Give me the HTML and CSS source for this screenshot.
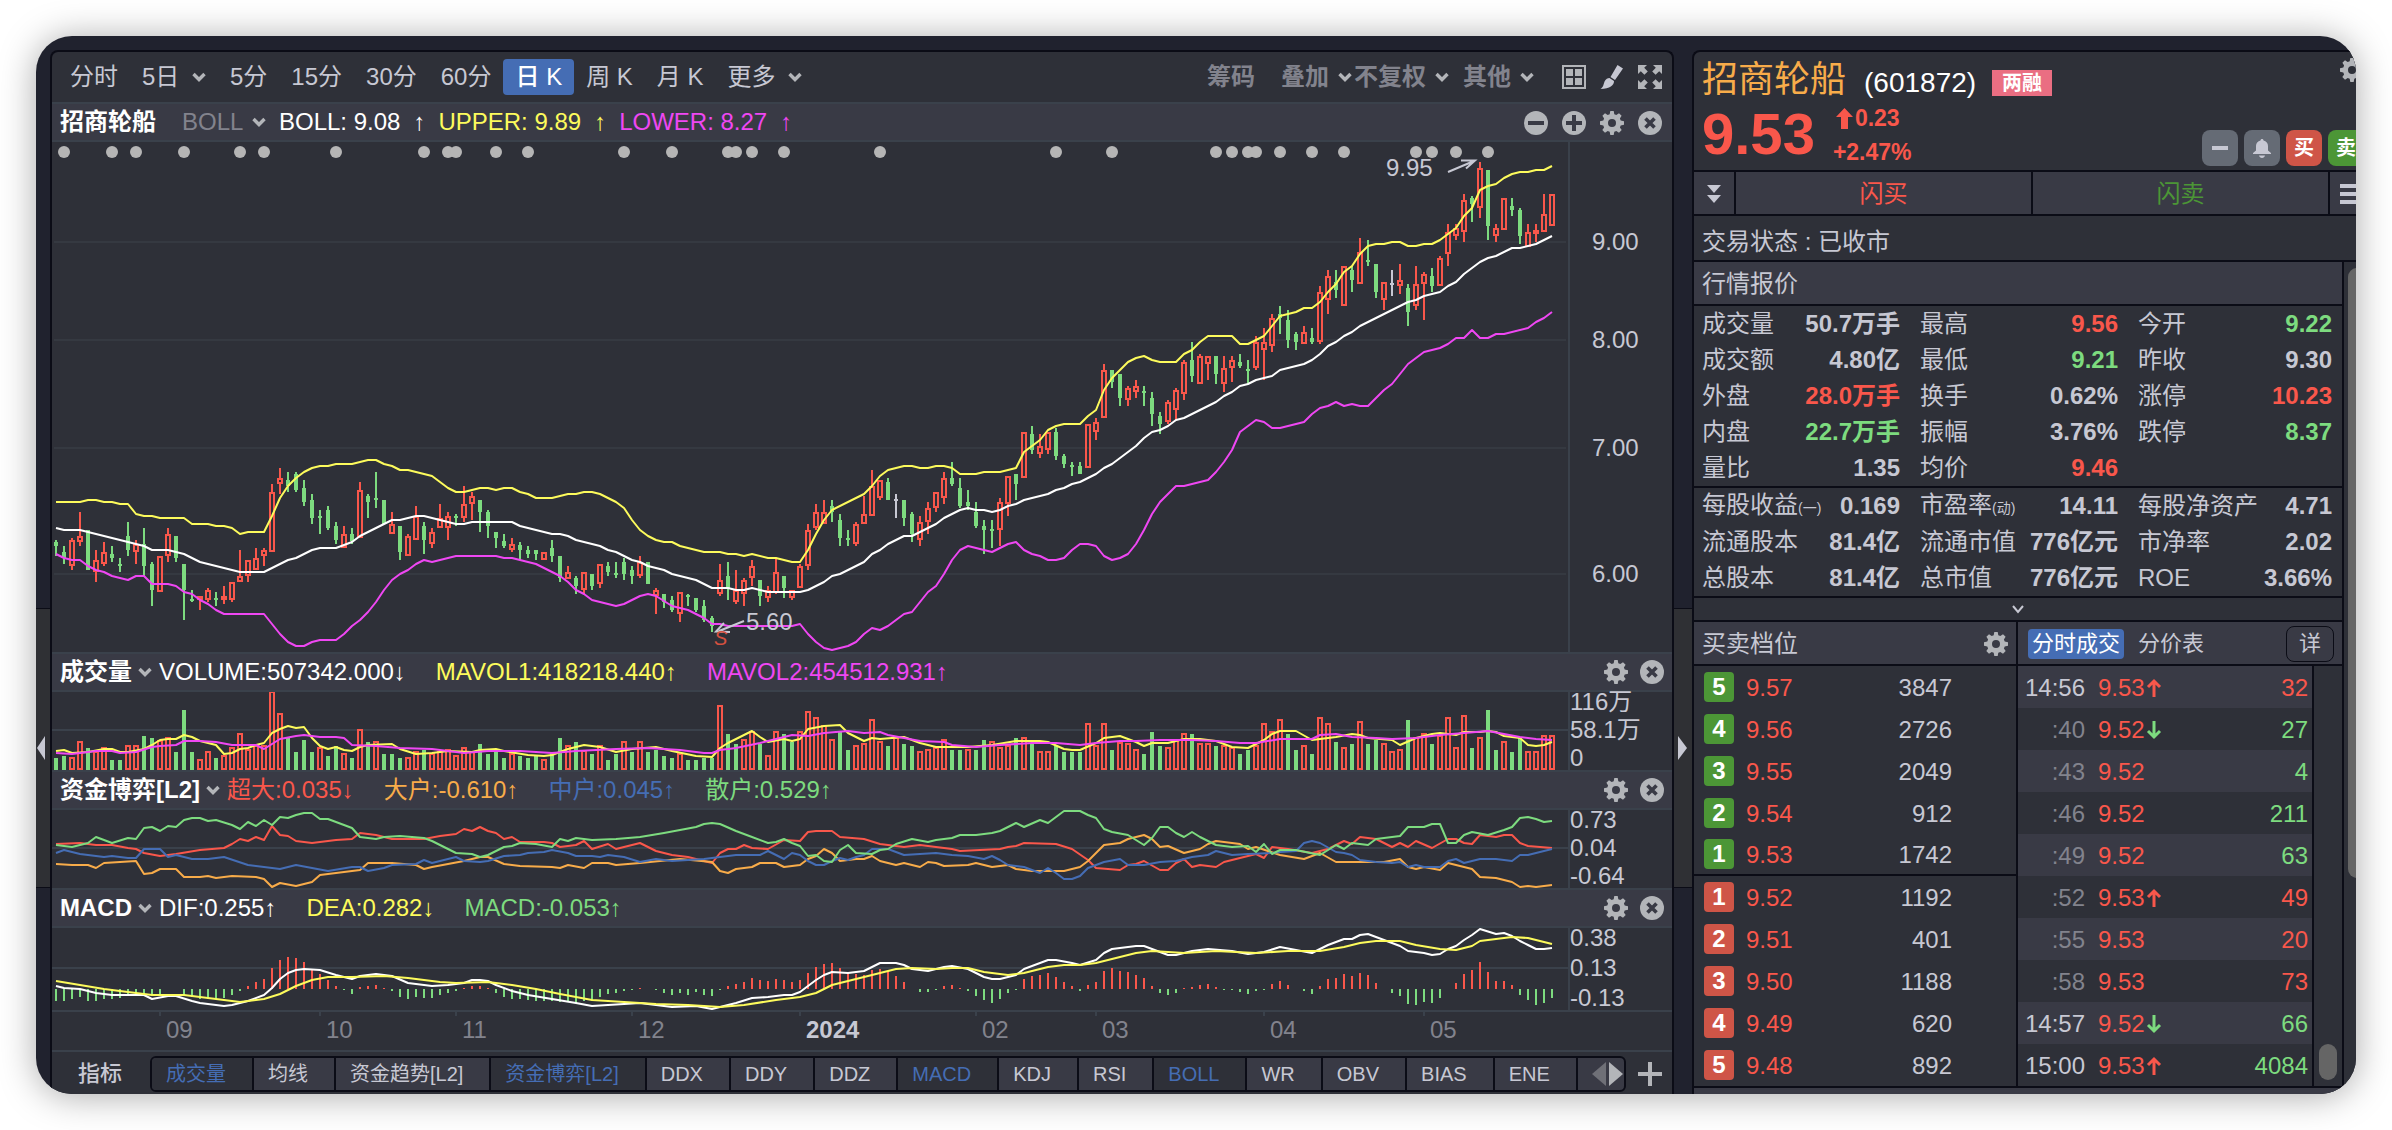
FILE: index.html
```html
<!DOCTYPE html>
<html lang="zh-CN">
<head>
<meta charset="UTF-8">
<meta name="viewport" content="width=device-width, initial-scale=1.0">
<title>招商轮船 (601872)</title>
<link rel="stylesheet" href="styles.css">
</head>
<body>

<!-- shared icons -->
<svg class="sprite" aria-hidden="true">
    <symbol id="chev" viewBox="0 0 14 10"><path d="M1.5 2L7 7.5L12.5 2" fill="none" stroke="currentColor" stroke-width="3.4"/></symbol>
    <symbol id="gear" viewBox="0 0 24 24"><path fill="currentColor" fill-rule="evenodd" d="M10.3 0h3.4l.6 3.2 2 .8L19 2.2l2.6 2.6L19.9 7.600l.8 1.900 3.300.700v3.600l-3.300.700-.8 1.900 1.800 2.700-2.700 2.700-2.700-1.800-2 .8-.6 3.200h-3.400l-.6-3.200-2-.8L5 21.800l-2.700-2.700 1.800-2.700-.8-1.900L0 13.800v-3.600l3.300-.7.800-1.900L2.400 4.800 5 2.200 7.700 4l2-.8zM12 8a4 4 0 1 0 0 8a4 4 0 1 0 0-8z"/></symbol>
    <symbol id="close" viewBox="0 0 24 24"><circle cx="12" cy="12" r="12" fill="currentColor"/><path d="M7.500 7.500l9 9M16.500 7.500l-9 9" stroke="#393a45" stroke-width="3.600"/></symbol>
    <symbol id="minus" viewBox="0 0 24 24"><circle cx="12" cy="12" r="12" fill="currentColor"/><path d="M4 12h16" stroke="#393a45" stroke-width="4"/></symbol>
    <symbol id="plus" viewBox="0 0 24 24"><circle cx="12" cy="12" r="12" fill="currentColor"/><path d="M4 12h16M12 4v16" stroke="#393a45" stroke-width="4"/></symbol>
    <symbol id="up" viewBox="0 0 16 20"><path d="M8 19V3M2 9l6-6 6 6" fill="none" stroke="currentColor" stroke-width="3"/></symbol>
    <symbol id="down" viewBox="0 0 16 20"><path d="M8 1v16M2 11l6 6 6-6" fill="none" stroke="currentColor" stroke-width="3"/></symbol>
</svg>

<div class="window">
    <div class="gutter">
        <button class="handle" aria-label="展开左侧"><svg width="8" height="24" viewBox="0 0 8 24"><path d="M8 0v24L0 12z" fill="currentColor"/></svg></button>
    </div>

    <main class="chart-panel">
        <nav class="toolbar">
            <button class="period">分时</button>
            <label class="pick period"><select aria-label="多日"><option>5日</option></select><svg><use href="#chev"/></svg></label>
            <button class="period">5分</button>
            <button class="period">15分</button>
            <button class="period">30分</button>
            <button class="period">60分</button>
            <button class="period active">日 K</button>
            <button class="period">周 K</button>
            <button class="period">月 K</button>
            <label class="pick period"><select aria-label="更多周期"><option>更多</option></select><svg><use href="#chev"/></svg></label>
            <div class="tools">
                <button class="chips">筹码</button>
                <label class="pick tight"><select aria-label="叠加"><option>叠加</option></select><svg><use href="#chev"/></svg></label>
                <label class="pick"><select aria-label="复权"><option>不复权</option></select><svg><use href="#chev"/></svg></label>
                <label class="pick"><select aria-label="其他"><option>其他</option></select><svg><use href="#chev"/></svg></label>
                <button class="icon" aria-label="多图"><svg viewBox="0 0 24 24"><path d="M1 1h22v22H1z" fill="none" stroke="currentColor" stroke-width="2"/><path d="M4 4h7v7H4zM13 4h7v7h-7zM4 13h7v7H4zM13 13h7v7h-7z" fill="currentColor"/></svg></button>
                <button class="icon" aria-label="画线"><svg viewBox="0 0 24 24"><path d="M17.500 0L23 3.500 15 15l-4.500-3zM9.500 13l4.500 3c.2 4-4 8-13.500 8 3-2 3-5 4.300-8C6 14 7.500 13 9.500 13z" fill="#c7c8d3"/></svg></button>
                <button class="icon" aria-label="全屏"><svg viewBox="0 0 24 24"><path d="M0 0h9L6.200 2.800l3.600 3.600-3.400 3.400-3.600-3.600L0 9zM24 0v9l-2.800-2.800-3.600 3.600-3.400-3.400 3.600-3.600L15 0zM0 24v-9l2.800 2.800 3.600-3.600 3.400 3.400-3.600 3.600L9 24zM24 24h-9l2.800-2.800-3.600-3.600 3.400-3.400 3.600 3.600L24 15z" fill="currentColor"/></svg></button>
            </div>
        </nav>

        <section>
            <header class="sub-head main-head">
                <strong>招商轮船</strong>
                <label class="pick dim"><select aria-label="主图指标"><option>BOLL</option></select><svg><use href="#chev"/></svg></label>
                <span class="white">BOLL: 9.08</span><span class="white">↑</span>
                <span class="yellow">UPPER: 9.89</span><span class="yellow">↑</span>
                <span class="magenta">LOWER: 8.27</span><span class="magenta">↑</span>
                <div class="head-icons">
                    <button class="icon" aria-label="缩小"><svg><use href="#minus"/></svg></button>
                    <button class="icon" aria-label="放大"><svg><use href="#plus"/></svg></button>
                    <button class="icon" aria-label="设置"><svg><use href="#gear"/></svg></button>
                    <button class="icon" aria-label="关闭"><svg><use href="#close"/></svg></button>
                </div>
            </header>
            <div class="plot-row price-row">
                <svg class="plot" id="price" viewBox="0 0 1516 510" preserveAspectRatio="none">
                    <path class="grid" d="M2 100H1514M2 198H1514M2 306H1514M2 432H1514"/>
                    <g class="bars"></g>
                    <g class="dots"></g>
                    <g class="lines"></g>
                    <g class="notes">
                        <text x="1334" y="34">9.95</text>
                        <path d="M1396 30L1422 19M1409 18.500l14 0-9 8"/>
                        <text x="694" y="488">5.60</text>
                        <path d="M692 479L667 489M672 481l-8 8.500 14 .5"/>
                        <text class="sell" x="662" y="503">S</text>
                    </g>
                </svg>
                <svg class="price-axis" viewBox="0 0 102 510" preserveAspectRatio="xMinYMin">
                    <text x="22" y="108">9.00</text>
                    <text x="22" y="206">8.00</text>
                    <text x="22" y="314">7.00</text>
                    <text x="22" y="440">6.00</text>
                </svg>
            </div>
        </section>

        <section>
            <header class="sub-head">
                <label class="pick"><select aria-label="副图一"><option>成交量</option></select><svg><use href="#chev"/></svg></label>
                <span class="value white">VOLUME:507342.000↓</span>
                <span class="value yellow">MAVOL1:418218.440↑</span>
                <span class="value magenta">MAVOL2:454512.931↑</span>
                <div class="head-icons">
                    <button class="icon" aria-label="设置"><svg><use href="#gear"/></svg></button>
                    <button class="icon" aria-label="关闭"><svg><use href="#close"/></svg></button>
                </div>
            </header>
            <div class="plot-row small-row">
                <svg class="plot" id="volume" viewBox="0 0 1516 78" preserveAspectRatio="none">
                    <path class="grid strong" d="M0 38H1516"/>
                    <g class="bars"></g>
                    <g class="lines"></g>
                </svg>
                <div class="axis"><span>116万</span><span>58.1万</span><span>0</span></div>
            </div>
        </section>

        <section>
            <header class="sub-head">
                <label class="pick"><select aria-label="副图二"><option>资金博弈[L2]</option></select><svg><use href="#chev"/></svg></label>
                <span class="value red">超大:0.035↓</span>
                <span class="value orange">大户:-0.610↑</span>
                <span class="value blue">中户:0.045↑</span>
                <span class="value green">散户:0.529↑</span>
                <div class="head-icons">
                    <button class="icon" aria-label="设置"><svg><use href="#gear"/></svg></button>
                    <button class="icon" aria-label="关闭"><svg><use href="#close"/></svg></button>
                </div>
            </header>
            <div class="plot-row small-row">
                <svg class="plot" id="funds" viewBox="0 0 1516 78" preserveAspectRatio="none">
                    <path class="grid strong" d="M0 38H1516"/>
                    <g class="lines"></g>
                </svg>
                <div class="axis"><span>0.73</span><span>0.04</span><span>-0.64</span></div>
            </div>
        </section>

        <section>
            <header class="sub-head">
                <label class="pick"><select aria-label="副图三"><option>MACD</option></select><svg><use href="#chev"/></svg></label>
                <span class="value white">DIF:0.255↑</span>
                <span class="value yellow">DEA:0.282↓</span>
                <span class="value green">MACD:-0.053↑</span>
                <div class="head-icons">
                    <button class="icon" aria-label="设置"><svg><use href="#gear"/></svg></button>
                    <button class="icon" aria-label="关闭"><svg><use href="#close"/></svg></button>
                </div>
            </header>
            <div class="plot-row macd-row">
                <svg class="plot" id="macd" viewBox="0 0 1516 82" preserveAspectRatio="none">
                    <path class="grid strong" d="M0 40H1516"/>
                    <g class="bars"></g>
                    <g class="lines"></g>
                </svg>
                <div class="axis"><span>0.38</span><span>0.13</span><span>-0.13</span></div>
            </div>
        </section>

        <div class="plot-row time-row">
            <svg class="plot" id="months" viewBox="0 0 1516 38" preserveAspectRatio="none">
                <path class="grid strong" d="M108 0v4M268 0v4M404 0v4M580 0v4M748 0v4M924 0v4M1044 0v4M1212 0v4M1372 0v4"/>
                <text x="114" y="26">09</text>
                <text x="274" y="26">10</text>
                <text x="410" y="26">11</text>
                <text x="586" y="26">12</text>
                <text class="year" x="754" y="26">2024</text>
                <text x="930" y="26">02</text>
                <text x="1050" y="26">03</text>
                <text x="1218" y="26">04</text>
                <text x="1378" y="26">05</text>
            </svg>
        </div>

        <footer class="indicators">
            <span class="caption">指标</span>
            <div class="tab-strip">
                <button class="tab on">成交量</button>
                <button class="tab">均线</button>
                <button class="tab">资金趋势[L2]</button>
                <button class="tab on">资金博弈[L2]</button>
                <button class="tab">DDX</button>
                <button class="tab">DDY</button>
                <button class="tab">DDZ</button>
                <button class="tab on">MACD</button>
                <button class="tab">KDJ</button>
                <button class="tab">RSI</button>
                <button class="tab on">BOLL</button>
                <button class="tab">WR</button>
                <button class="tab">OBV</button>
                <button class="tab">BIAS</button>
                <button class="tab">ENE</button>
                <div class="scroller">
                    <button class="prev" aria-label="上一页"><svg width="14" height="24" viewBox="0 0 14 24"><path d="M14 0v24L0 12z" fill="currentColor"/></svg></button>
                    <button aria-label="下一页"><svg width="14" height="24" viewBox="0 0 14 24"><path d="M0 0v24l14-12z" fill="currentColor"/></svg></button>
                </div>
            </div>
            <button class="icon" aria-label="添加指标"><svg viewBox="0 0 24 24"><path d="M0 12h24M12 0v24" stroke="currentColor" stroke-width="4"/></svg></button>
        </footer>
    </main>

    <div class="gutter">
        <button class="handle right" aria-label="收起右侧"><svg width="9" height="24" viewBox="0 0 9 24"><path d="M0 0v24l9-12z" fill="currentColor"/></svg></button>
    </div>

    <aside class="quote">
        <header class="quote-head">
            <div class="title-row">
                <h1>招商轮船</h1>
                <span class="code">(601872)</span>
                <span class="badge">两融</span>
                <button class="icon" aria-label="设置"><svg><use href="#gear"/></svg></button>
            </div>
            <div class="price-line">
                <span class="last">9.53</span>
                <div class="change">
                    <span class="diff"><svg width="17" height="21" viewBox="0 0 17 21"><path d="M8.500 0L17 9h-5v12H5V9H0z" fill="currentColor"/></svg>0.23</span>
                    <span>+2.47%</span>
                </div>
                <div class="actions">
                    <button class="act" aria-label="移除自选"><svg width="16" height="4" viewBox="0 0 16 4"><path d="M0 0h16v4H0z" fill="currentColor"/></svg></button>
                    <button class="act" aria-label="提醒"><svg width="18" height="19" viewBox="0 0 18 19"><path d="M9 0c1 0 1.500.700 1.500 1.500 2.800.600 4.500 2.800 4.500 5.500v4.500l3 2.500v1H0v-1l3-2.500V7c0-2.700 1.700-4.900 4.500-5.500C7.500.700 8 0 9 0zM6 16.500h6c-.3 1.600-1.500 2.500-3 2.500s-2.700-.9-3-2.500z" fill="currentColor"/></svg></button>
                    <button class="act buy">买</button>
                    <button class="act sell">卖</button>
                </div>
            </div>
        </header>

        <div class="flash">
            <button aria-label="展开"><svg width="14" height="18" viewBox="0 0 14 18"><path d="M0 0h14L7 8zM0 10h14l-7 8z" fill="currentColor"/></svg></button>
            <button class="red">闪买</button>
            <button class="deep-green">闪卖</button>
            <button class="menu" aria-label="菜单"><svg width="24" height="20" viewBox="0 0 24 20"><path d="M0 2h24M0 10h24M0 18h24" stroke="currentColor" stroke-width="4"/></svg></button>
        </div>
        <p class="status">交易状态 : 已收市</p>

        <div class="scroll-area">
            <div class="scroll-body">
                <h2 class="bar">行情报价</h2>
                <dl class="facts">
                    <div><dt>成交量</dt><dd>50.7万手</dd></div>
                    <div><dt>最高</dt><dd class="red">9.56</dd></div>
                    <div><dt>今开</dt><dd class="green">9.22</dd></div>
                    <div><dt>成交额</dt><dd>4.80亿</dd></div>
                    <div><dt>最低</dt><dd class="green">9.21</dd></div>
                    <div><dt>昨收</dt><dd>9.30</dd></div>
                    <div><dt>外盘</dt><dd class="red">28.0万手</dd></div>
                    <div><dt>换手</dt><dd>0.62%</dd></div>
                    <div><dt>涨停</dt><dd class="red">10.23</dd></div>
                    <div><dt>内盘</dt><dd class="green">22.7万手</dd></div>
                    <div><dt>振幅</dt><dd>3.76%</dd></div>
                    <div><dt>跌停</dt><dd class="green">8.37</dd></div>
                    <div><dt>量比</dt><dd>1.35</dd></div>
                    <div><dt>均价</dt><dd class="red">9.46</dd></div>
                </dl>
                <dl class="facts">
                    <div><dt>每股收益<small>(一)</small></dt><dd>0.169</dd></div>
                    <div><dt>市盈率<small>(动)</small></dt><dd>14.11</dd></div>
                    <div><dt>每股净资产</dt><dd>4.71</dd></div>
                    <div><dt>流通股本</dt><dd>81.4亿</dd></div>
                    <div><dt>流通市值</dt><dd>776亿元</dd></div>
                    <div><dt>市净率</dt><dd>2.02</dd></div>
                    <div><dt>总股本</dt><dd>81.4亿</dd></div>
                    <div><dt>总市值</dt><dd>776亿元</dd></div>
                    <div><dt>ROE</dt><dd>3.66%</dd></div>
                </dl>
                <button class="more" aria-label="展开更多"><svg width="12" height="9" viewBox="0 0 12 9"><path d="M1 1l5 6 5-6" fill="none" stroke="currentColor" stroke-width="2"/></svg></button>

                <div class="books">
                    <section class="ladder">
                        <div class="bar"><h2>买卖档位</h2><button class="icon" aria-label="设置"><svg><use href="#gear"/></svg></button></div>
                        <table>
                            <tbody class="asks">
                                <tr><th scope="row"><span>5</span></th><td class="red">9.57</td><td class="qty">3847</td></tr>
                                <tr><th scope="row"><span>4</span></th><td class="red">9.56</td><td class="qty">2726</td></tr>
                                <tr><th scope="row"><span>3</span></th><td class="red">9.55</td><td class="qty">2049</td></tr>
                                <tr><th scope="row"><span>2</span></th><td class="red">9.54</td><td class="qty">912</td></tr>
                                <tr><th scope="row"><span>1</span></th><td class="red">9.53</td><td class="qty">1742</td></tr>
                            </tbody>
                            <tbody class="bids">
                                <tr><th scope="row"><span>1</span></th><td class="red">9.52</td><td class="qty">1192</td></tr>
                                <tr><th scope="row"><span>2</span></th><td class="red">9.51</td><td class="qty">401</td></tr>
                                <tr><th scope="row"><span>3</span></th><td class="red">9.50</td><td class="qty">1188</td></tr>
                                <tr><th scope="row"><span>4</span></th><td class="red">9.49</td><td class="qty">620</td></tr>
                                <tr><th scope="row"><span>5</span></th><td class="red">9.48</td><td class="qty">892</td></tr>
                            </tbody>
                        </table>
                    </section>
                    <section class="trades">
                        <div class="bar">
                            <button class="seg active">分时成交</button>
                            <button class="seg">分价表</button>
                            <button class="detail">详</button>
                        </div>
                        <div class="trade-list">
                            <table>
                                <tr><td class="time full">14:56</td><td class="red">9.53<svg><use href="#up"/></svg></td><td class="qty red">32</td></tr>
                                <tr><td class="time">:40</td><td class="red">9.52<svg class="green"><use href="#down"/></svg></td><td class="qty green">27</td></tr>
                                <tr><td class="time">:43</td><td class="red">9.52</td><td class="qty green">4</td></tr>
                                <tr><td class="time">:46</td><td class="red">9.52</td><td class="qty green">211</td></tr>
                                <tr><td class="time">:49</td><td class="red">9.52</td><td class="qty green">63</td></tr>
                                <tr><td class="time">:52</td><td class="red">9.53<svg><use href="#up"/></svg></td><td class="qty red">49</td></tr>
                                <tr><td class="time">:55</td><td class="red">9.53</td><td class="qty red">20</td></tr>
                                <tr><td class="time">:58</td><td class="red">9.53</td><td class="qty red">73</td></tr>
                                <tr><td class="time full">14:57</td><td class="red">9.52<svg class="green"><use href="#down"/></svg></td><td class="qty green">66</td></tr>
                                <tr><td class="time full">15:00</td><td class="red">9.53<svg><use href="#up"/></svg></td><td class="qty green">4084</td></tr>
                            </table>
                            <div class="mini-track"><div class="thumb"></div></div>
                        </div>
                    </section>
                </div>
                <div class="next-bar"></div>
            </div>
            <div class="track"><div class="thumb"></div></div>
        </div>
    </aside>
</div>

<script src="chart.js"></script>
</body>
</html>
```
FILE: styles.css
```css
* {
    margin: 0;
    padding: 0;
    box-sizing: border-box;
}
:root {
    --bg: #2e3038;
    --bar: #393a45;
    --frame: #20222e;
    --edge: #0b0c16;
    --rule: #3a414b;
    --text: #c7c8d3;
    --icon: #b3b5b9;
    --dim: #82838d;
    --red: #f9574b;
    --green: #7ddb7f;
    --deep-green: #4c9636;
    --yellow: #fdfb5c;
    --magenta: #ef47f3;
    --orange: #f8ac4a;
    --blue: #456db4;
}
body {
    background: #fff;
    padding: 36px;
    color: var(--text);
    font-family: "Liberation Sans", "Noto Sans CJK SC", sans-serif;
    font-size: 24px;
    line-height: 30px;
}
button, select {
    font: inherit;
    color: inherit;
    background: none;
    border: none;
    cursor: pointer;
    white-space: nowrap;
}
select {
    appearance: none;
    outline: none;
    height: 34px;
}
h1, h2 {
    font-size: 24px;
    font-weight: normal;
}
.sprite {
    display: none;
}
.red { color: var(--red); }
.green { color: var(--green); }
.deep-green { color: var(--deep-green); }
.yellow { color: var(--yellow); }
.magenta { color: var(--magenta); }
.orange { color: var(--orange); }
.blue { color: var(--blue); }
.white { color: #fff; }

.window {
    display: grid;
    grid-template-columns: 14px minmax(0, 1fr) 18px 664px;
    padding-top: 14px;
    background: var(--frame);
    border-radius: 36px;
    overflow: hidden;
    box-shadow: 0 2px 36px rgba(0, 0, 0, 0.34);
}

/* side handles */
.gutter {
    padding-top: 558px;
}
.handle {
    display: flex;
    align-items: center;
    width: 100%;
    height: 280px;
    padding-left: 1px;
    background: #2f3034;
    border-top: 1px solid var(--edge);
    border-bottom: 1px solid var(--edge);
}
.handle.right {
    padding-left: 4px;
}

/* chart panel */
.chart-panel {
    background: var(--bg);
    border: 2px solid var(--edge);
    border-bottom: none;
    border-radius: 8px 8px 0 0;
    overflow: hidden;
}
.toolbar {
    display: flex;
    align-items: center;
    height: 50px;
    padding: 0 10px 0 6px;
}
.period {
    height: 36px;
    padding: 0 12px;
    border-radius: 4px;
}
.period.active {
    background: var(--blue);
    color: #fff;
    font-weight: 500;
}
.pick {
    display: inline-flex;
    align-items: center;
    gap: 6px;
}
.pick svg {
    width: 14px;
    height: 10px;
    color: var(--icon);
}
.pick.period {
    gap: 12px;
}
.tools {
    display: flex;
    align-items: center;
    gap: 14px;
    margin-left: auto;
    color: var(--dim);
    font-weight: 600;
}
.tools .pick {
    gap: 9px;
}
.tools .pick.tight {
    margin-right: -12px;
}
.tools .chips {
    margin-right: 12px;
}
.tools .pick + .icon {
    margin-left: 14px;
}
.icon {
    width: 24px;
    height: 24px;
    flex: none;
    color: var(--icon);
}
.icon svg {
    display: block;
    width: 24px;
    height: 24px;
}

.sub-head {
    display: flex;
    align-items: center;
    height: 40px;
    padding: 0 8px;
    background: var(--bar);
    border-top: 2px solid var(--rule);
    border-bottom: 2px solid var(--rule);
}
.sub-head .pick {
    margin-right: 7px;
    color: #fff;
    font-weight: 600;
}
.sub-head .value {
    margin-right: 30px;
    white-space: nowrap;
}
.main-head {
    gap: 13px;
    padding-right: 10px;
}
.main-head strong {
    color: #fff;
    font-weight: 600;
}
.main-head .pick {
    gap: 8px;
    margin-left: 13px;
    margin-right: 0;
    color: var(--dim);
    font-weight: normal;
}
.main-head .pick svg {
    color: var(--icon);
}
.head-icons {
    display: flex;
    gap: 12px;
    margin-left: auto;
}
.main-head .head-icons {
    gap: 14px;
    padding-top: 2px;
}

.plot-row {
    display: grid;
    grid-template-columns: minmax(0, 1fr) 104px;
}
.price-row { height: 510px; }
.small-row { height: 78px; }
.macd-row { height: 82px; }
.time-row {
    height: 42px;
    border-top: 2px solid var(--rule);
    border-bottom: 2px solid var(--rule);
}
.plot {
    display: block;
    width: 100%;
    height: 100%;
}
.time-row .plot {
    height: 38px;
}
.axis, .price-axis {
    width: 104px;
    height: 100%;
    border-left: 2px solid var(--rule);
}
.axis {
    display: flex;
    flex-direction: column;
    justify-content: space-between;
    padding-bottom: 2px;
    line-height: 20px;
}
.price-axis text {
    fill: var(--text);
    font-size: 24px;
}
.grid {
    stroke: #353941;
    stroke-width: 2;
    fill: none;
}
.grid.strong {
    stroke: var(--rule);
}
.bars {
    shape-rendering: crispEdges;
}
.bars .r { stroke: var(--red); stroke-width: 2; fill: none; }
.bars .g { stroke: var(--green); stroke-width: 2; fill: none; }
.bars .w { stroke: var(--text); stroke-width: 2; fill: none; }
.bars .g-fill { fill: var(--green); }
.bars .w-fill { fill: var(--text); }
.dots {
    fill: #b5b5b5;
}
.lines polyline {
    fill: none;
    stroke: currentColor;
    stroke-width: 2;
    stroke-linejoin: round;
}
.notes text {
    fill: var(--text);
    font-size: 24px;
}
.notes path {
    fill: none;
    stroke: var(--text);
    stroke-width: 2;
}
.notes .sell {
    fill: #d4503f;
    font-size: 20px;
    font-style: italic;
}
#months text {
    fill: var(--dim);
    font-size: 24px;
}
#months .year {
    fill: var(--text);
    font-weight: bold;
}

/* indicator tabs */
.indicators {
    display: flex;
    align-items: center;
    height: 42px;
    padding: 2px 10px 0 26px;
    font-size: 20px;
}
.caption {
    width: 72px;
    font-size: 22px;
    font-weight: 500;
}
.tab-strip {
    display: flex;
    flex: 1;
    min-width: 0;
    height: 36px;
    margin-right: 12px;
    background: var(--bar);
    border: 2px solid var(--edge);
    border-radius: 6px;
    overflow: hidden;
}
.tab {
    padding: 0 26px 0 14px;
    border-right: 2px solid var(--edge);
}
.tab.on {
    background: var(--bg);
    color: var(--blue);
}
.scroller {
    display: flex;
    align-items: center;
    justify-content: flex-end;
    gap: 3px;
    flex: 1;
    padding-right: 1px;
    color: var(--icon);
}
.scroller svg {
    display: block;
}
.scroller .prev {
    color: #6f7077;
}

/* quote panel runs past the right edge of the window */
.quote {
    display: flex;
    flex-direction: column;
    width: calc(100% + 18px);
    background: var(--bg);
    border: 2px solid var(--edge);
    border-right: none;
    border-bottom: none;
    border-radius: 8px 0 0 0;
    overflow: hidden;
}
.quote-head {
    height: 120px;
    padding: 4px 10px 0 8px;
    border-bottom: 2px solid var(--edge);
}
.title-row {
    display: flex;
    align-items: center;
    height: 46px;
}
.title-row h1 {
    padding-top: 2px;
    color: var(--orange);
    font-size: 36px;
    line-height: 46px;
}
.code {
    margin: 8px 16px 0 18px;
    color: #fff;
    font-size: 28px;
}
.badge {
    width: 60px;
    height: 26px;
    margin-top: 8px;
    background: #ea6e82;
    color: #fff;
    font-size: 20px;
    font-weight: bold;
    line-height: 26px;
    text-align: center;
}
.title-row .icon {
    margin: 0 0 18px auto;
}
.price-line {
    display: flex;
    align-items: flex-end;
    height: 64px;
    color: var(--red);
    font-weight: bold;
}
.last {
    font-size: 58px;
    line-height: 64px;
}
.change {
    display: flex;
    flex-direction: column;
    gap: 6px;
    margin-left: 18px;
    font-size: 23px;
    line-height: 28px;
}
.diff {
    display: flex;
    align-items: center;
    gap: 2px;
    padding-left: 3px;
}
.actions {
    display: flex;
    gap: 6px;
    margin-left: auto;
}
.act {
    display: grid;
    place-items: center;
    width: 36px;
    height: 36px;
    background: #656b75;
    border-radius: 8px;
    color: var(--text);
    font-size: 20px;
    font-weight: bold;
}
.act.buy {
    background: #cf5547;
    color: #fff;
}
.act.sell {
    background: var(--deep-green);
    color: #fff;
}
.flash {
    display: grid;
    grid-template-columns: 42px 1fr 1fr 44px;
    height: 44px;
    border-bottom: 2px solid var(--edge);
    background: var(--bar);
}
.flash button {
    padding-top: 2px;
    border-right: 2px solid var(--edge);
}
.flash svg {
    display: block;
    margin: 0 auto;
}
.flash .menu {
    border-right: none;
}
.status {
    height: 46px;
    padding: 0 8px;
    line-height: 52px;
    border-bottom: 2px solid var(--edge);
}
.scroll-area {
    display: flex;
    flex: 1;
}
.scroll-body {
    display: flex;
    flex-direction: column;
    flex: 1;
    border-right: 2px solid var(--edge);
}
.bar {
    display: flex;
    align-items: center;
    height: 44px;
    padding: 2px 8px 0;
    background: var(--bar);
    border-bottom: 2px solid var(--edge);
}
.bar .icon {
    margin-left: auto;
}
.facts {
    display: grid;
    grid-template-columns: 1fr 1fr 194px;
    column-gap: 20px;
    grid-auto-rows: 36px;
    padding: 0 10px 0 8px;
    border-bottom: 2px solid var(--edge);
}
.facts div {
    display: flex;
    align-items: center;
    justify-content: space-between;
    white-space: nowrap;
}
.facts dd {
    font-weight: bold;
}
.facts small {
    font-size: 14px;
}
.more {
    display: grid;
    place-items: center;
    height: 24px;
    border-bottom: 2px solid var(--edge);
}
.books {
    display: grid;
    grid-template-columns: 1fr 1fr;
    border-bottom: 2px solid var(--edge);
}
.books table {
    width: 100%;
    border-spacing: 0;
}
.books td, .books th {
    height: 42px;
    vertical-align: middle;
}
.books td {
    padding-top: 2px;
}
.qty {
    text-align: right;
}
.ladder {
    border-right: 2px solid var(--edge);
}
.ladder th {
    width: 52px;
    padding-left: 10px;
    text-align: left;
}
.ladder th span {
    display: block;
    width: 30px;
    height: 30px;
    border-radius: 4px;
    background: var(--deep-green);
    color: #fff;
    text-align: center;
}
.bids th span {
    background: #cf5547;
}
.ladder .qty {
    padding-right: 64px;
}
.asks tr:last-child > * {
    border-bottom: 2px solid var(--edge);
}
.trades .bar {
    font-size: 22px;
    padding: 2px 8px 0 10px;
}
.seg {
    height: 30px;
    margin-right: 10px;
    padding: 0 4px;
    border-radius: 4px;
}
.seg.active {
    background: var(--blue);
    color: #fff;
}
.detail {
    width: 48px;
    height: 36px;
    margin-left: auto;
    border: 1px solid var(--edge);
    border-radius: 8px;
}
.trade-list {
    display: flex;
}
.trades tr:nth-child(odd) {
    background: var(--bar);
}
.trades .time {
    width: 80px;
    padding-right: 13px;
    color: var(--dim);
    text-align: right;
}
.trades .time.full {
    color: var(--text);
}
.trades .qty {
    padding-right: 4px;
}
.trades td svg {
    width: 16px;
    height: 20px;
    margin-left: 1px;
    vertical-align: -2px;
}
.mini-track {
    display: flex;
    flex: none;
    align-items: flex-end;
    justify-content: center;
    width: 30px;
    padding-bottom: 6px;
    border-left: 2px solid var(--edge);
}
.mini-track .thumb {
    width: 18px;
    height: 36px;
    border-radius: 9px;
    background: #656565;
}
.next-bar {
    flex: 1;
    min-height: 6px;
    background: var(--bar);
}
.track {
    width: 30px;
    padding: 6px 4px;
}
.track .thumb {
    height: 610px;
    border-radius: 9px;
    background: #656565;
}
```
FILE: chart.js
```js
// 188 trading days, 8 units apart; y values are already in plot units
const STEP = 8;
const x = i => 4 + i * STEP;

// colour + high,bodyTop,bodyBottom,low
const candles = `
g398,400,404,414 g404,410,416,422 r396,399,423,428 r370,395,399,404 g388,388,428,428 r408,419,429,440 r400,411,421,424 g404,412,416,420
g416,422,424,430 g380,394,408,414 r398,403,409,422 g386,402,424,434 g420,422,448,464 r414,415,449,450 r386,393,413,420 g394,394,416,420
g422,422,448,478 g448,457,459,460 r454,455,457,468 r446,449,457,460 g450,456,458,464 r444,455,457,462 r440,441,457,460 r408,435,439,440
r418,419,433,440 r406,417,427,427 r406,409,413,424 r342,351,409,409 r326,337,341,352 g330,338,344,350 g330,332,348,350 g338,346,360,364
g352,358,376,382 g368,374,376,392 g364,368,386,388 g380,384,398,402 r384,393,405,405 g386,392,399,402 r340,349,395,395 g352,354,360,376
g330,356,358,366 g358,358,382,382 r370,383,391,392 g384,384,410,418 r392,395,413,414 r364,375,397,397 g380,384,398,412 r386,391,401,406
r362,377,385,385 r370,375,385,398 g372,374,376,384 r344,363,375,380 r350,355,361,378 g358,358,370,390 g368,370,384,396 g390,390,396,406
g392,399,404,406 r396,403,407,410 g400,403,408,418 g404,408,412,416 g408,408,412,418 r410,411,417,418 g398,406,414,420 g414,414,436,440
r424,431,436,436 g434,436,444,452 r431,431,447,452 g432,432,444,448 r422,423,441,446 g420,424,430,434 g420,431,433,436 g416,420,432,438
g424,428,434,442 r414,421,433,436 g420,420,442,442 r446,449,453,472 g452,452,460,466 g454,458,468,470 r450,451,471,480 g452,453,455,464
g456,456,468,470 g458,464,478,480 g474,476,484,490 r422,439,451,454 g420,434,446,458 r428,449,459,462 r436,439,451,464 r418,425,435,444
g438,438,454,464 r444,449,455,460 r416,431,450,452 g434,434,446,456 r448,449,455,458 r422,425,445,445 r382,389,423,428 r362,371,385,388
r358,371,381,382 g358,364,370,380 g372,378,396,404 g388,396,398,404 r380,383,401,404 r354,373,381,381 r328,345,373,373 r339,339,355,358
g336,340,358,358 w352,357,359,376 g358,358,376,384 g370,372,392,400 r374,381,397,404 r360,367,379,392 r350,351,365,370 r330,337,355,362
g320,336,342,344 g336,346,364,366 g348,360,364,368 g360,370,384,386 g378,384,388,412 g378,387,389,406 r356,361,387,404 r335,335,361,374
g332,332,342,358 r291,291,335,335 g284,292,308,312 r292,305,311,316 r291,291,307,312 g286,290,314,318 g312,314,322,326 g320,323,325,334
g320,324,332,332 r282,283,325,326 r276,281,289,298 r222,229,275,275 g228,228,240,246 g232,232,256,264 r244,247,257,264 r238,245,249,256
g244,249,251,264 g250,256,272,284 g270,274,282,292 r258,261,279,282 r246,249,267,278 r218,221,251,258 g200,218,234,240 r212,215,241,242
r214,215,221,238 g214,214,232,242 r214,227,241,250 r214,219,225,240 g212,220,224,226 g218,227,229,242 r194,201,225,228 r186,201,207,238
r172,177,203,210 g164,172,176,192 g168,178,198,206 g190,192,200,208 r184,191,201,202 g186,196,200,202 r144,151,199,202 r128,135,157,172
g128,140,148,156 r124,125,163,163 g124,128,138,150 r96,111,141,142 g98,118,120,124 g122,122,150,156 r141,141,157,168 w128,141,143,154
r122,139,143,152 g142,146,170,184 r124,143,163,168 r130,133,141,178 g126,134,144,150 r114,117,143,144 r82,91,111,124 r82,87,93,98
r52,59,89,100 g54,56,62,80 r20,27,65,76 g28,28,84,98 r82,87,93,100 r56,57,87,88 g56,64,68,74 g66,68,94,102
r82,91,104,104 r82,89,91,100 r52,73,89,89 r52,53,83,83`;

const volumes = `
g12 g14 r13 r29 g22 r19 r23 g10 g10 r25 r25 g34 g32 r30 r33 g18 g60 g18 r11 r19 g12 r15 r23 r37 r21 r25 r25 r79 r57 g32 g18 g30
g18 r23 g14 g24 r17 g12 r41 g28 r29 g16 g16 g12 r13 r19 g20 r17 r19 r21 r15 r23 r19 g26 g16 g18 g12 r17 g14 g12 g14 r11 g18 g32
r25 g28 r20 g16 r25 g10 g16 r29 g18 r29 g18 g20 g14 g12 r17 g10 g10 g12 g12 r65 g36 g26 r31 r39 g26 r15 r39 g36 g28 r39 r59 r53
r45 r31 g38 g20 r25 r27 r51 r29 g24 r33 g26 g24 r19 r21 r23 r31 g20 g20 r21 g20 g30 r29 r23 r25 g32 r33 g26 r19 r19 g24 g18 g18
g18 r47 r25 r47 g20 r28 r27 r21 g16 g38 g24 r23 r31 r37 g36 r27 r27 g24 r25 r23 g16 g20 r25 r47 r39 r51 g36 g20 r25 g16 r53 r47
g28 r23 g26 r49 g26 g30 r27 r19 r21 g50 r33 r37 g26 r35 r53 r23 r55 g22 r33 g60 g20 r29 g18 g32 r19 r19 r35 r35`;

const histogram = `
-12 -12 -10 -8 -12 -12 -10 -10 -9 -7 -7 -7 -7 -6 0 0 -6 -8 -10 -10 -10 -9 -6 -2 3 7 10 21 29 32 31 27
19 15 9 3 -1 -5 2 3 4 1 -2 -8 -10 -8 -9 -9 -6 -4 -2 1 3 3 1 -4 -8 -10 -10 -11 -12 -12 -12 -13
-13 -14 -12 -11 -8 -5 -4 -2 -1 1 0 -1 -4 -6 -4 -6 -3 -6 -7 -1 3 5 7 11 9 8 10 9 7 9 16 22
25 26 21 16 15 14 19 20 18 13 7 0 -3 -3 -1 3 4 1 -2 -7 -11 -14 -10 -4 -1 10 13 14 16 12 7 3
-2 4 7 18 21 18 17 14 11 3 -4 -6 -4 1 2 4 5 2 -1 -1 -3 -5 -2 -1 5 8 4 0 -2 -5 3 10
11 15 13 16 14 6 0 -4 -7 -15 -16 -13 -14 -9 0 6 15 19 27 17 8 8 4 -6 -11 -16 -14 -9`;

const events = [1, 7, 10, 16, 23, 26, 35, 46, 49, 50, 55, 59, 71, 77, 84, 85, 87, 91, 103, 125, 132,
    145, 147, 149, 150, 153, 157, 161, 170, 172, 175, 179];

// index,y pairs; points on a straight run are left out
const boll = {
    white: `0,386 1,388 3,388 9,400 11,404 12,408 14,408 16,412 18,420 23,430 26,430 29,418 30,416 32,408 33,406 35,406 37,400 38,394 42,378 43,378
        45,374 46,374 50,382 51,382 52,380 57,380 58,384 62,392 63,392 64,394 65,398 68,404 69,408 70,410 72,418 73,420 74,424 76,428 77,432 80,438
        82,446 84,446 85,448 86,448 87,446 89,450 93,450 94,448 96,440 97,434 98,432 101,420 102,412 103,408 104,402 106,394 107,394 110,382 111,376
        113,368 114,366 115,368 116,368 117,370 118,368 119,364 120,362 121,358 124,352 125,348 126,346 127,342 128,340 130,332 131,326 132,322
        135,304 136,296 137,290 138,288 139,284 140,278 141,276 145,260 146,254 147,250 148,244 149,242 150,238 152,234 153,228 156,222 157,218
        158,212 159,204 160,200 161,194 162,190 163,184 169,160 170,158 171,154 173,150 174,144 175,140 176,132 178,120 179,116 180,114 182,106
        183,106 185,102 187,94`,
    magenta: `0,412 1,416 2,418 3,418 4,424 5,428 6,430 7,434 9,438 10,434 11,434 12,442 14,442 15,444 16,450 17,452 18,458 19,462 20,468 21,472
        26,472 27,482 28,492 29,500 30,504 31,504 32,500 33,498 35,498 36,492 37,484 38,478 39,470 40,460 41,448 42,438 43,432 44,428 45,422 46,418
        47,420 50,414 55,414 56,416 57,416 60,422 62,430 63,434 64,440 65,448 66,452 67,458 70,464 71,462 73,454 74,452 75,454 77,464 79,468 81,476
        82,482 83,482 84,484 92,484 93,482 94,492 95,500 96,506 97,508 99,504 100,500 101,492 102,486 103,488 104,484 106,472 107,470 109,450
        110,444 111,432 112,418 113,408 114,404 117,410 119,402 120,400 121,408 122,412 123,414 124,418 125,418 126,416 127,408 128,402 129,402
        130,404 131,414 132,418 133,416 134,412 135,402 136,388 137,372 138,360 140,344 141,344 144,338 145,330 146,320 147,308 148,290 150,278
        151,280 152,286 153,286 156,280 157,272 158,266 159,264 160,260 161,264 162,262 163,264 164,264 166,248 167,242 169,222 171,210 173,206
        174,202 175,196 176,196 177,188 178,196 179,196 180,192 181,192 184,186 185,180 186,176 187,170`,
    yellow: `0,360 3,360 4,358 5,358 6,360 7,360 8,362 9,362 10,372 11,374 12,374 13,376 16,376 17,382 19,382 20,384 21,384 22,386 23,392 24,390
        26,390 27,374 28,356 29,344 30,336 31,330 32,326 33,324 34,324 35,322 37,322 38,320 39,318 40,318 41,322 42,324 43,328 44,328 47,334 48,340
        49,346 50,350 51,350 53,346 54,346 55,348 56,346 57,346 58,350 59,352 60,356 62,356 64,352 65,352 66,350 67,350 68,352 70,360 71,366 72,378
        73,388 74,394 75,398 76,400 77,400 78,404 81,410 83,410 84,412 85,412 86,414 87,412 89,416 90,416 92,420 93,420 94,408 95,392 96,378 97,368
        101,352 102,344 103,334 104,328 106,324 107,324 108,326 109,326 110,324 111,324 112,326 113,332 115,332 116,330 118,330 120,326 121,310
        122,304 123,298 124,288 125,284 126,282 128,282 129,274 130,268 131,248 132,236 133,228 134,220 135,216 136,214 137,218 138,220 140,220
        141,212 142,208 143,200 144,194 147,194 148,202 149,202 151,194 152,184 153,174 155,170 156,166 157,166 158,160 159,150 160,142 161,130
        162,124 163,112 164,104 165,102 166,102 167,100 168,100 169,104 170,104 171,102 172,102 173,98 175,86 176,74 177,66 178,48 179,44 180,42
        181,36 182,32 183,30 184,30 185,28 186,28 187,24`
};

const mavol = {
    yellow: `0,59 1,58 2,61 4,60 6,57 7,57 8,60 9,60 11,57 12,53 13,48 14,47 15,47 16,43 17,45 18,49 19,51 20,53 21,62 22,61 23,57 24,56 25,53
        26,51 27,41 28,37 29,34 30,36 31,35 32,46 33,54 34,57 35,55 36,58 37,59 38,55 39,53 42,52 43,57 45,62 47,61 49,59 52,60 53,58 55,57 56,59
        59,63 61,64 62,63 64,57 66,53 68,55 70,60 72,57 75,55 77,59 80,64 82,65 83,56 84,51 86,43 87,39 88,45 89,50 91,47 92,49 93,47 94,37 96,34
        98,33 99,41 101,49 102,46 103,47 106,45 108,51 110,55 114,55 117,53 120,49 123,49 124,50 126,57 127,58 128,58 130,51 131,46 133,44 135,50
        136,54 137,51 139,51 141,47 143,47 145,49 147,55 149,56 151,48 152,42 153,39 155,39 157,48 159,46 160,45 162,42 163,43 164,46 167,48 168,53
        170,46 172,42 173,41 175,43 176,40 178,40 179,39 180,40 181,44 183,46 184,53 185,54 186,53 187,50`,
    magenta: `0,61 2,62 4,60 5,59 7,59 8,61 10,60 12,55 13,54 15,53 16,49 18,49 20,50 22,53 25,53 26,57 28,47 30,44 31,43 33,45 35,45 36,46 37,53
        40,54 43,56 47,57 49,59 51,61 54,59 58,59 62,61 65,59 70,57 74,56 78,58 81,61 82,61 83,58 85,56 88,51 90,47 92,43 94,44 96,41 99,39 101,41
        103,40 104,43 106,46 108,49 111,50 112,53 115,55 118,53 122,51 125,51 128,53 130,51 133,49 135,49 138,48 142,48 145,49 148,51 150,51 153,47
        157,47 158,43 160,42 162,45 165,46 167,47 170,46 173,43 176,41 179,39 181,42 183,45 185,47 187,48`
};

const funds = {
    red: `0,34 3,33 5,35 7,35 9,38 10,39 11,43 13,46 15,44 18,40 21,38 22,34 23,29 24,31 25,27 26,30 27,16 28,25 29,26 30,31 32,33 35,30 37,29
        38,23 40,25 42,29 46,29 48,26 50,24 51,19 52,21 53,17 54,21 55,23 56,29 57,27 58,32 61,32 62,33 63,37 65,35 66,31 67,39 69,34 70,39 73,33
        75,41 77,45 79,47 81,51 82,53 83,43 84,39 85,39 86,35 87,38 89,39 91,30 93,31 94,22 95,21 97,21 98,27 101,29 103,34 106,37 108,35 110,37
        112,39 113,41 118,39 119,37 120,36 121,33 125,34 127,39 129,50 130,58 133,60 134,55 135,54 136,51 138,60 139,60 140,53 141,49 142,57 143,55
        145,57 146,52 148,48 150,44 151,48 152,37 154,39 157,43 159,39 161,31 162,34 163,27 165,29 167,37 168,33 169,37 170,31 172,38 174,29 175,29
        176,33 177,34 178,25 180,27 181,25 182,25 183,33 184,36 187,38`,
    orange: `0,54 2,55 4,55 5,58 6,53 8,52 10,51 11,64 12,63 13,59 15,59 16,67 18,67 19,66 20,68 22,66 25,67 26,69 27,77 28,73 30,76 32,72 33,65
        35,63 38,60 39,53 42,53 45,55 46,59 47,57 51,51 52,49 53,47 54,47 56,54 58,56 62,57 63,58 64,55 66,58 67,53 69,53 70,55 73,53 78,49 82,52
        83,61 84,63 85,59 87,57 88,53 90,53 91,57 93,55 94,49 95,46 96,39 97,43 98,51 100,49 101,49 102,46 103,51 105,55 106,53 108,57 109,52
        110,53 111,56 114,55 115,53 117,57 119,55 120,59 122,61 126,61 128,57 129,51 131,35 133,33 134,29 136,25 137,29 138,37 139,36 141,43 143,39
        144,34 145,31 148,34 149,39 150,37 153,45 156,49 158,43 160,52 166,52 168,49 169,57 170,59 171,57 173,60 174,53 177,59 178,67 180,68 182,72
        183,77 184,76 185,77 187,75`,
    blue: `0,43 1,40 3,44 5,46 6,47 7,46 9,48 10,48 11,39 13,39 14,47 15,45 17,49 19,49 21,47 24,55 26,57 28,59 30,55 32,58 34,61 37,57 38,57
        39,61 41,58 42,55 45,54 46,50 47,53 50,47 51,51 53,52 54,51 56,46 58,45 59,43 61,42 62,40 64,43 65,46 67,46 68,47 69,45 71,47 73,52 75,49
        77,51 79,50 81,49 83,47 85,45 88,45 89,41 91,49 92,43 93,45 94,51 95,55 96,55 97,51 98,48 99,50 100,47 101,45 102,39 104,39 106,45 110,43
        112,45 114,46 116,49 117,46 118,50 119,55 121,57 123,63 124,58 125,63 126,69 127,69 128,66 129,58 131,52 133,49 134,55 136,55 138,52 140,51
        142,47 144,45 145,41 147,45 149,44 152,43 153,42 155,41 156,33 157,31 158,33 160,42 161,43 162,45 163,50 165,52 167,53 168,52 169,57 170,55
        171,57 173,57 174,51 175,49 176,53 178,49 180,49 182,51 183,45 184,45 186,41 187,39`,
    green: `0,35 2,37 4,33 5,27 7,33 9,28 10,29 11,18 12,17 13,21 14,16 15,17 16,10 17,8 18,8 19,11 20,10 22,15 23,19 24,12 25,16 26,10 27,15
        28,7 29,8 30,5 31,3 32,3 33,9 34,9 36,15 37,18 38,27 40,29 41,27 43,26 46,28 47,31 48,35 49,39 50,43 52,44 53,47 54,45 56,37 57,36 58,33
        60,34 62,37 63,29 64,31 65,28 67,30 70,29 73,27 76,23 80,17 81,14 82,13 83,14 85,21 87,27 89,33 90,32 91,29 92,33 93,36 94,46 95,45 96,51
        97,52 98,40 99,35 100,43 102,44 103,40 104,39 105,34 107,29 109,32 110,30 112,28 113,25 115,25 117,23 118,21 119,17 120,13 121,17 123,10
        124,13 126,1 128,1 129,5 130,8 131,19 132,22 134,25 135,30 136,35 137,28 138,17 139,17 140,23 141,27 142,22 143,27 144,31 145,35 147,37
        149,36 150,42 151,34 152,44 153,40 155,40 158,45 160,35 161,39 162,33 164,35 165,29 167,27 168,26 169,17 171,17 172,14 173,14 174,33 175,33
        176,25 177,22 179,25 181,20 182,17 183,8 184,7 185,9 186,12 187,11`
};

const macd = {
    white: `0,58 1,60 3,61 5,65 7,67 11,67 12,71 14,68 15,68 17,73 18,75 20,77 21,78 22,77 24,73 26,67 27,60 28,51 29,45 30,42 31,41 33,42 35,47
        37,51 38,48 40,46 42,48 44,55 47,58 49,57 51,55 52,52 53,52 54,53 55,57 57,63 59,67 62,71 65,75 67,78 69,77 73,75 77,79 80,78 82,81 83,79
        85,75 87,70 89,69 91,67 92,67 93,64 94,58 95,52 96,47 97,44 99,45 101,43 102,39 103,35 105,35 106,37 107,41 109,43 111,39 112,38 114,41
        115,45 116,49 117,51 118,51 120,47 121,41 123,35 124,32 125,32 127,35 128,37 130,32 131,25 132,21 135,18 136,18 138,24 139,27 140,27 142,23
        144,21 147,23 149,26 151,24 153,19 155,22 157,25 159,17 161,11 162,11 163,7 164,6 166,12 167,15 168,18 169,23 171,25 172,27 173,26 174,21
        175,18 176,12 177,7 178,1 180,6 181,5 182,8 183,13 184,17 185,21 186,21 187,20`,
    yellow: `0,53 3,57 6,61 9,64 12,67 16,67 20,71 23,74 26,71 28,66 30,58 32,52 34,49 37,49 41,48 44,50 48,54 50,55 54,54 57,57 60,61 63,66
        67,72 71,74 75,76 79,77 83,79 86,77 90,72 93,69 95,65 97,57 98,55 101,49 105,41 107,40 110,41 112,40 114,40 116,44 119,47 121,45 124,39
        126,37 128,37 130,35 133,29 135,25 137,23 139,24 141,25 145,23 150,25 154,23 158,23 161,19 163,15 165,13 168,13 170,17 173,21 175,22 177,18
        178,13 180,11 182,9 184,10 187,16`
};

const list = text => text.trim().split(/\s+/);

function drawLines(id, series) {
    document.querySelector(`#${id} .lines`).innerHTML = Object.entries(series).map(([color, text]) => {
        const points = list(text).map(pair => {
            const [i, y] = pair.split(",").map(Number);
            return `${x(i)},${y}`;
        });
        return `<polyline class="${color}" points="${points.join(" ")}"/>`;
    }).join("");
}

// rising days are hollow, falling days are solid
document.querySelector("#price .bars").innerHTML = list(candles).map((item, i) => {
    const c = item[0];
    const [high, top, bottom, low] = item.slice(1).split(",").map(Number);
    const cx = x(i);
    if (c === "r") {
        return `<path class="r" d="M${cx} ${high}V${top}M${cx} ${bottom}V${low}M${cx - 2} ${top}h4V${bottom}h-4z"/>`;
    }
    return `<path class="${c}" d="M${cx} ${high}V${low}"/><rect class="${c}-fill" x="${cx - 2}" y="${top}" width="4" height="${bottom - top}"/>`;
}).join("");

document.querySelector("#price .dots").innerHTML = events.map(i => `<circle cx="${x(i)}" cy="10" r="6"/>`).join("");

document.querySelector("#volume .bars").innerHTML = list(volumes).map((item, i) => {
    const h = Number(item.slice(1));
    const cx = x(i);
    if (item[0] === "r") {
        return `<path class="r" d="M${cx - 2} 77V${79 - h}h4V77z"/>`;
    }
    return `<rect class="g-fill" x="${cx - 2}" y="${78 - h}" width="4" height="${h}"/>`;
}).join("");

document.querySelector("#macd .bars").innerHTML = list(histogram).map((item, i) => {
    const v = Number(item);
    return v ? `<path class="${v > 0 ? "r" : "g"}" d="M${x(i)} 61v${-v}"/>` : "";
}).join("");

drawLines("price", boll);
drawLines("volume", mavol);
drawLines("funds", funds);
drawLines("macd", macd);
```
